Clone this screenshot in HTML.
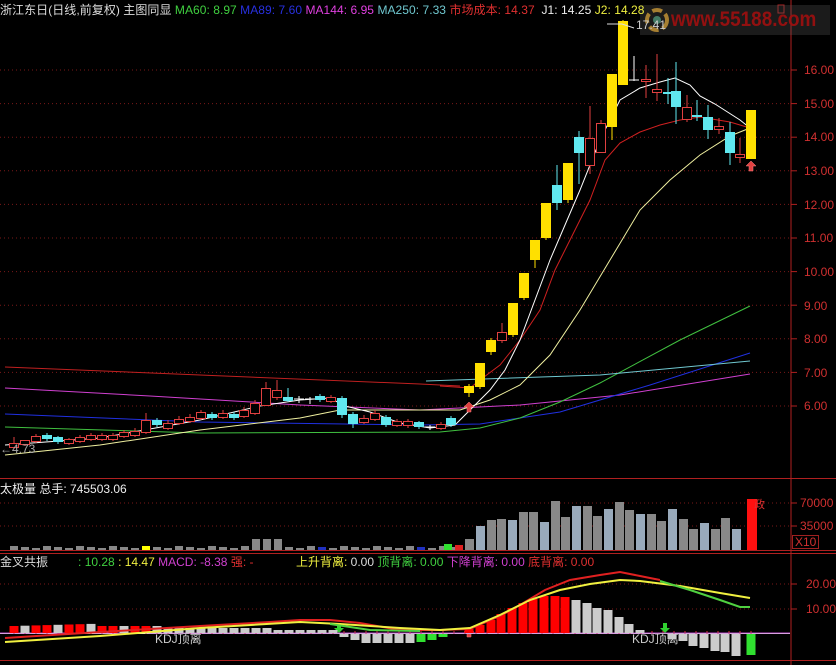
<!DOCTYPE html>
<html><head><meta charset="utf-8"><style>
body{margin:0;background:#000;width:836px;height:665px;overflow:hidden;font-family:"Liberation Sans","Noto Sans CJK SC",sans-serif}
svg{position:absolute;left:0;top:0}
.t{position:absolute;font-size:12px;white-space:nowrap;line-height:14px}
.ax{position:absolute;left:804px;color:#d03030;font-size:12px;line-height:12px}
</style></head><body>
<svg id="s" width="836" height="665" xmlns="http://www.w3.org/2000/svg"></svg>
<div style="position:absolute;left:640px;top:5px;width:190px;height:30px;background:rgba(90,90,90,0.3)"></div>
<div class="t" style="left:0;top:3px;letter-spacing:0.05px"><span style="color:#ddd">浙江东日(日线,前复权) 主图同显</span> <span style="color:#40d040">MA60: 8.97</span> <span style="color:#2830e0">MA89: 7.60</span> <span style="color:#e040e0">MA144: 6.95</span> <span style="color:#70c8d0">MA250: 7.33</span> <span style="color:#e03030">市场成本: 14.37</span> &nbsp;<span style="color:#eee">J1: 14.25</span> <span style="color:#f0f040">J2: 14.28</span></div>
<div class="t" style="left:636px;top:18px;color:#ccc">17.41</div>
<div class="t" style="left:0;top:442px;color:#aaa">←4.73</div>
<div class="t" style="left:0;top:482px;color:#eee">太极量 总手: 745503.06</div>
<div class="t" style="left:0;top:555px"><span style="color:#ddd">金叉共振</span> &nbsp; &nbsp; &nbsp; &nbsp; <span style="color:#40d040">: 10.28</span> <span style="color:#f0f040">: 14.47</span> <span style="color:#d040d0">MACD: -8.38</span> <span style="color:#e03030">强: -</span></div>
<div class="t" style="left:296px;top:555px"><span style="color:#f0f040">上升背离: </span><span style="color:#ddd">0.00</span> <span style="color:#40d040">顶背离: 0.00</span> <span style="color:#d040d0">下降背离: 0.00</span> <span style="color:#e03030">底背离: 0.00</span></div>
<div class="t" style="left:155px;top:632px;color:#ccc">KDJ顶离</div>
<div class="t" style="left:632px;top:632px;color:#ccc">KDJ顶离</div>
<div class="t" style="left:754px;top:498px;color:#e03030;font-size:11px">政</div>
<div class="t" style="left:671px;top:8px;color:rgba(160,15,15,0.9);font-size:21px;line-height:24px;font-weight:bold;transform:scaleX(0.9);transform-origin:left">www.55188.com</div>
<div class="ax" style="top:64px">16.00</div><div class="ax" style="top:98px">15.00</div><div class="ax" style="top:131px">14.00</div><div class="ax" style="top:165px">13.00</div><div class="ax" style="top:199px">12.00</div><div class="ax" style="top:232px">11.00</div><div class="ax" style="top:266px">10.00</div><div class="ax" style="top:300px">9.00</div><div class="ax" style="top:333px">8.00</div><div class="ax" style="top:367px">7.00</div><div class="ax" style="top:400px">6.00</div>
<div class="ax" style="top:497px;left:800px">70000</div><div class="ax" style="top:520px;left:800px">35000</div>
<div class="ax" style="top:535px;left:792px;border:1px solid #a02020;padding:0 2px">X10</div>
<div class="ax" style="top:578px;left:806px">20.00</div><div class="ax" style="top:603px;left:806px">10.00</div>
<script>
var s=document.getElementById('s'),h='';
function L(x1,y1,x2,y2,c,w,d){h+='<line x1="'+x1+'" y1="'+y1+'" x2="'+x2+'" y2="'+y2+'" stroke="'+c+'" stroke-width="'+(w||1)+'"'+(d?' stroke-dasharray="'+d+'"':'')+'/>';}
function R(x,y,w,hh,f,st){h+='<rect x="'+x+'" y="'+y+'" width="'+w+'" height="'+Math.max(hh,1)+'" fill="'+f+'"'+(st?' stroke="'+st+'"':'')+'/>';}
function P(pts,c,w){h+='<polyline fill="none" stroke="'+c+'" stroke-width="'+(w||1)+'" points="'+pts+'"/>';}
L(791,0,791,665,'#b02020');L(0,478.5,836,478.5,'#b02020');L(0,550.5,836,550.5,'#b02020');L(0,553.5,836,553.5,'#b02020');L(0,660.5,836,660.5,'#b02020');
for(var p=6;p<=16;p++){var y=70+(16-p)*33.6;L(0,y,790,y,'#7a1818',1,'1 3');L(791,y,797,y,'#b02020');}
[503,526].forEach(function(y){L(0,y,790,y,'#7a1818',1,'1 3');L(791,y,797,y,'#b02020')});
[584,609].forEach(function(y){L(0,y,790,y,'#7a1818',1,'1 3');L(791,y,797,y,'#b02020')});
h+='<circle cx="657" cy="20" r="10" fill="none" stroke="#c89020" stroke-width="4" stroke-dasharray="10 4"/><circle cx="657" cy="20" r="4" fill="#3a8a6a"/>';
h+='<rect x="778" y="5" width="6" height="8" fill="none" stroke="#b02020"/>';
P('5,367 200,375 420,384 460,386','#c02020');
P('5,388 150,396 300,405 420,410 520,405 620,395 750,374','#d040d0');
P('5,414 200,422 420,425 480,424 560,412 650,385 750,353','#2030e0');
P('5,427 200,433 440,432 480,428 520,418 560,402 600,383 680,340 750,306','#40c040');
P('426,381 600,375 750,361','#70c8d0');
P('440,386 470,388 480,380 500,365 520,340 540,310 555,270 570,240 590,200 605,160 620,143 640,132 660,125 680,120 700,117 730,122 750,128','#d02020');
P('5,455 100,445 200,430 300,418 340,410 400,410 460,410 490,400 520,385 550,355 580,310 610,260 640,210 670,180 700,155 730,136 750,128','#f0f0a0');
P('5,445 100,438 200,420 260,406 300,400 330,398 345,406 370,412 400,423 430,428 455,425 470,410 490,390 505,370 520,340 535,300 550,260 565,225 580,190 600,140 620,100 640,88 660,82 675,78 690,85 700,96 715,104 740,120 750,128','#fff');
var C=[[14,443,447,437,449,'r'],[25,440,444,440,446,'r'],[36,436,441,434,443,'r'],[47,435,439,433,441,'c'],[58,437,442,436,444,'c'],[69,439,443,438,445,'r'],[80,437,441,435,443,'r'],[91,435,439,433,441,'r'],[102,435,439,433,441,'r'],[113,435,439,433,441,'r'],[124,432,436,430,438,'r'],[135,431,435,428,437,'r'],[146,420,432,413,434,'r'],[157,420,425,418,427,'c'],[168,423,428,420,430,'r'],[179,419,423,416,425,'r'],[190,417,421,414,423,'r'],[201,412,418,410,420,'r'],[212,414,418,412,420,'c'],[223,413,417,410,419,'r'],[234,414,418,412,420,'c'],[244,410,416,407,418,'r'],[255,403,413,400,415,'r'],[266,388,405,382,406,'r'],[277,390,397,380,400,'r'],[288,397,401,388,402,'c'],[299,399,400,396,403,'w'],[310,399,400,397,404,'w'],[320,396,400,394,402,'c'],[331,397,401,395,403,'r'],[342,398,415,396,418,'c'],[353,414,424,412,428,'c'],[364,418,422,415,424,'r'],[375,413,419,410,421,'r'],[386,417,425,415,427,'c'],[397,421,425,419,427,'r'],[408,421,425,419,428,'r'],[419,422,427,421,429,'c'],[430,427,428,425,430,'w'],[441,424,428,422,430,'r'],[451,418,425,416,427,'c'],
[469,386,393,384,397,'y'],[480,363,387,363,389,'y'],[491,340,352,338,355,'y'],[502,332,340,323,343,'r'],[513,303,335,303,337,'y'],[524,273,298,273,300,'y'],[535,240,260,240,268,'y'],[546,203,238,203,240,'y'],[557,185,203,165,210,'c'],[568,163,200,163,203,'y'],[579,137,153,131,184,'c'],[590,138,165,106,174,'r'],[601,123,152,120,152,'r'],[612,74,127,74,140,'y'],[623,21,85,20,85,'y'],[634,80,81,56,81,'w'],[646,79,81,65,98,'r'],[657,89,92,54,101,'r'],[668,92,94,78,104,'c'],[676,91,107,62,124,'c'],[687,107,119,95,122,'r'],[697,115,117,100,121,'c'],[708,117,130,105,139,'c'],[719,126,129,118,134,'r'],[730,132,153,122,165,'c'],[740,154,157,138,163,'r'],[751,110,159,110,159,'y']];
C.forEach(function(c){var x=c[0],col=c[5]=='r'?'#e04040':c[5]=='c'?'#60e8f0':c[5]=='y'?'#ffe000':'#fff';
L(x,c[3],x,c[4],col);
if(c[5]=='r')R(x-4.5,c[1]+.5,9,c[2]-c[1],'#000',col);else if(c[5]=='w')L(x-5,c[1],x+5,c[1],col);else R(x-5,c[1],10,c[2]-c[1],col);});
P('607,24 622,24 634,28','#ddd');
function up(x,y){h+='<path d="M'+x+' '+y+' l-5 5 h3 v5 h4 v-5 h3 z" fill="#e04040" stroke="#ff8080" stroke-width=".5"/>';}
up(469,402);up(751,161);up(469,627);
function dn(x,y){h+='<path d="M'+x+' '+(y+10)+' l-5 -5 h3 v-5 h4 v5 h3 z" fill="#30d030"/>';}
dn(339,623);dn(665,623);
var V=[[469,539],[480,526],[491,520],[501,519],[512,520],[523,512],[533,512],[544,522],[555,501],[565,517],[576,506],[587,506],[597,516],[608,509],[619,502],[629,510],[640,514],[651,514],[661,521],[672,509],[683,519],[693,529],[704,523],[715,529],[725,518],[736,529]];
for(var i=0;i<41;i++){var x=14+11*i,t=546+(i%3);var col='#888';if(x>255&&x<280)t=539;if(x==146)col='#ff0';if(x==322)col='#2030c0';if(x==421)col='#2030c0';R(x-4,t,8,550-t,col);}
R(444,544,8,6,'#30e030');R(455,545,8,5,'#e02020');
V.forEach(function(v,i){R(v[0]-4,v[1],9,550-v[1],i%3==1?'#9ab':'#888');});
R(747,499,10,51,'#ff1010');
L(0,633.5,790,633.5,'#fff');
for(var i=0;i<68;i++){var x=14+11*i;if(x>752)break;L(x,631,x,634,'#e03030');}
L(0,633,790,633,'#b040c0');
var M=[];
for(var i=0;i<30;i++){var x=14+11*i,v=i<14?(626-(i<8?i*0.3:0)):(i<24?628:630);M.push([x,v,i<14&&i%3!=1?'#f00':'#ccc']);}
var MR=[[469,629,'#f00'],[480,625,'#f00'],[491,620,'#f00'],[501,614,'#f00'],[512,608,'#f00'],[523,603,'#f00'],[533,599,'#f00'],[544,596,'#f00'],[555,596,'#f00'],[565,597,'#f00'],[576,600,'#ccc'],[587,603,'#ccc'],[597,608,'#ccc'],[608,610,'#ccc'],[619,617,'#ccc'],[629,624,'#ccc'],[640,630,'#ccc']];
M.concat(MR).forEach(function(m){R(m[0]-4.5,m[1],9,633-m[1],m[2]);});
var MN=[[344,637],[355,640],[366,643],[377,643],[388,643],[399,643],[410,643],[421,642,'#30e030'],[432,640,'#30e030'],[443,637,'#30e030'],[672,639],[683,641],[693,646],[704,648],[715,651],[725,652],[736,656],[751,655,'#30e030']];
MN.forEach(function(m){R(m[0]-4.5,634,9,m[1]-634,m[2]||'#ccc');});
P('5,638 100,632 200,626 270,622 300,620 330,620 360,623 400,630 440,630 470,629 500,616 520,605 545,590 570,580 600,575 620,572 640,576 660,580','#e02020',2);
P('5,642 100,636 200,628 300,622 340,624 400,628 440,630 470,628 500,615 530,600 560,590 590,584 620,580 640,581 680,586 720,593 750,598','#f0f040',2);
P('660,581 690,590 720,600 740,607 750,607','#50d040',2);
P('330,624 370,630 420,631','#50d040',2);
s.innerHTML=h;
</script>
</body></html>
